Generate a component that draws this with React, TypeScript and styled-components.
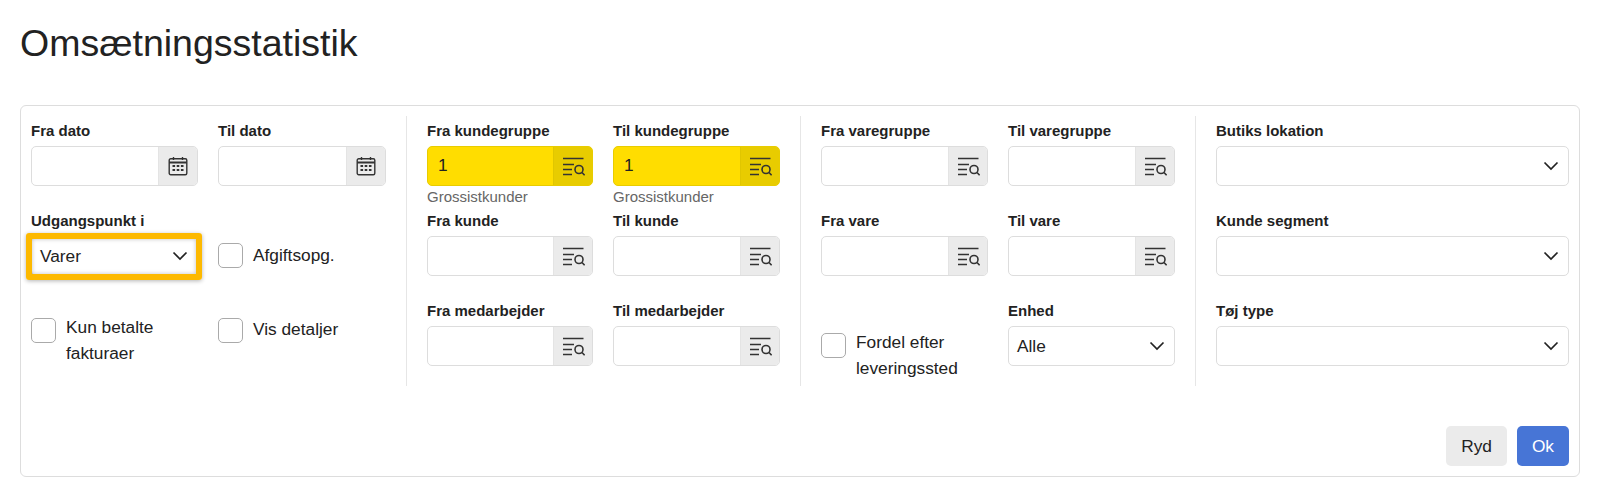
import React from "react";
import styled, { createGlobalStyle } from "styled-components";

const GlobalStyle = createGlobalStyle`
  html, body {
    margin: 0;
    background: #fff;
    color: #222;
    font-family: "Liberation Sans", Arial, sans-serif;
  }
  * { box-sizing: border-box; }
`;

const Page = styled.div`
  width: 1598px;
  height: 496px;
  padding: 19px 18px 0 20px;
  overflow: hidden;
`;

const Title = styled.h1`
  margin: 0 0 38px;
  height: 48px;
  font-size: 37.5px;
  line-height: 48px;
  font-weight: 400;
  color: #222;
`;

const Card = styled.div`
  height: 372px;
  border: 1px solid #ddd;
  border-radius: 6px;
  padding: 10px 10px 9px;
`;

const Sections = styled.div`
  display: flex;
  height: 270px;
`;

const Section = styled.div<{ $cols: string; $first?: boolean; $last?: boolean }>`
  display: grid;
  grid-template-columns: ${(p) => p.$cols};
  grid-auto-rows: 90px;
  column-gap: 20px;
  padding: 0 ${(p) => (p.$last ? "0" : "20px")} 0 ${(p) => (p.$first ? "0" : "20px")};
  border-right: ${(p) => (p.$last ? "none" : "1px solid #e6e6e6")};
  ${(p) => p.$last && "flex: 1;"}
`;

const Field = styled.div`
  position: relative;
  min-width: 0;
`;

const Label = styled.div`
  height: 30px;
  font-size: 15px;
  line-height: 30px;
  font-weight: 700;
  color: #222;
  white-space: nowrap;
`;

const Group = styled.div<{ $filled?: boolean }>`
  display: flex;
  height: 40px;
  border: 1px solid ${(p) => (p.$filled ? "#e8cc00" : "#ddd")};
  border-radius: 5px;
  overflow: hidden;
  background: ${(p) => (p.$filled ? "#ffdd00" : "#fff")};
`;

const Value = styled.div`
  flex: 1;
  padding-left: 10px;
  font-size: 17.3px;
  line-height: 36px;
  color: #222;
`;

const Addon = styled.div<{ $filled?: boolean }>`
  display: flex;
  align-items: center;
  justify-content: center;
  flex: 0 0 39px;
  color: #333;
  background: ${(p) => (p.$filled ? "#e8cc00" : "#ebebeb")};
  border-left: 1px solid ${(p) => (p.$filled ? "#e0c600" : "#e4e4e4")};
`;

const Hint = styled.div`
  margin-top: 2px;
  font-size: 15px;
  line-height: 18px;
  color: #666;
`;

const SelectBox = styled.div`
  display: flex;
  align-items: center;
  justify-content: space-between;
  height: 40px;
  padding: 0 9px 0 8px;
  border: 1px solid #ddd;
  border-radius: 5px;
  background: #fff;
  font-size: 17.3px;
  color: #222;
`;

const Highlight = styled.div`
  position: absolute;
  top: 27px;
  left: -5px;
  width: 176px;
  height: 47px;
  border: 6px solid #fdb900;
  border-radius: 3px;
  box-shadow: 0 1px 4px rgba(0, 0, 0, 0.3), inset 0 0 4px rgba(0, 0, 0, 0.25);
  pointer-events: none;
`;

const CheckRow = styled.div<{ $top: number }>`
  display: flex;
  gap: 10px;
  padding-top: ${(p) => p.$top}px;
  font-size: 17.3px;
  line-height: 25.5px;
  color: #222;
`;

const CheckText = styled.span<{ $lift: number }>`
  margin-top: -${(p) => p.$lift}px;
`;

const Box = styled.span`
  flex: 0 0 25px;
  height: 25px;
  border: 1px solid #aaa;
  border-radius: 5px;
  background: #fff;
`;

const Footer = styled.div`
  display: flex;
  justify-content: flex-end;
  gap: 10px;
  margin-top: 40px;
`;

const Button = styled.button<{ $primary?: boolean }>`
  height: 40px;
  padding: 0 15px;
  border: none;
  border-radius: 5px;
  font-family: inherit;
  font-size: 17.3px;
  color: ${(p) => (p.$primary ? "#fff" : "#222")};
  background: ${(p) => (p.$primary ? "#4775d6" : "#ebebeb")};
`;

const CalendarIcon = () => (
  <svg width="20" height="20" viewBox="0 0 20 20" fill="none" stroke="#333">
    <rect x="1.2" y="2.8" width="17.6" height="16" rx="1.5" strokeWidth="1.4" />
    <path d="M1.2 6.5h17.6" strokeWidth="2" />
    <path d="M5.5 1v3M14.5 1v3" strokeWidth="1.4" />
    <path d="M4.5 10h2.6M8.7 10h2.6M12.9 10h2.6M4.5 14h2.6M8.7 14h2.6M12.9 14h2.6" strokeWidth="2" />
  </svg>
);

const LookupIcon = () => (
  <svg width="23" height="19" viewBox="0 0 23 19" fill="none" stroke="#333" strokeWidth="1.6">
    <path d="M1 1.5h20.5M1 7.5h11M1 12.5h9M1 17.5h9" />
    <circle cx="17" cy="12.5" r="4" />
    <path d="M20 15.5l2.6 2.8" />
  </svg>
);

const Chevron = () => (
  <svg width="16" height="10" viewBox="0 0 16 10" fill="none" stroke="#222" strokeWidth="1.7">
    <path d="M1.5 1.5L8 8l6.5-6.5" />
  </svg>
);

type InputProps = { label: string; value?: string; hint?: string };

const DateField = ({ label }: InputProps) => (
  <Field>
    <Label>{label}</Label>
    <Group>
      <Value />
      <Addon>
        <CalendarIcon />
      </Addon>
    </Group>
  </Field>
);

const LookupField = ({ label, value, hint }: InputProps) => (
  <Field>
    <Label>{label}</Label>
    <Group $filled={!!value}>
      <Value>{value}</Value>
      <Addon $filled={!!value}>
        <LookupIcon />
      </Addon>
    </Group>
    {hint && <Hint>{hint}</Hint>}
  </Field>
);

const SelectField = ({ label, value, children }: InputProps & { children?: React.ReactNode }) => (
  <Field>
    <Label>{label}</Label>
    <SelectBox>
      <span>{value}</span>
      <Chevron />
    </SelectBox>
    {children}
  </Field>
);

const Check = ({ top, lift = 0, children }: { top: number; lift?: number; children: React.ReactNode }) => (
  <CheckRow $top={top}>
    <Box />
    <CheckText $lift={lift}>{children}</CheckText>
  </CheckRow>
);

export default function App() {
  return (
    <Page>
      <GlobalStyle />
      <Title>Omsætningsstatistik</Title>
      <Card>
        <Sections>
          <Section $first $cols="167px 168px">
            <DateField label="Fra dato" />
            <DateField label="Til dato" />
            <SelectField label="Udgangspunkt i" value="Varer">
              <Highlight />
            </SelectField>
            <Check top={37}>Afgiftsopg.</Check>
            <Check top={22} lift={3}>
              Kun betalte
              <br />
              fakturaer
            </Check>
            <Check top={22} lift={1}>Vis detaljer</Check>
          </Section>
          <Section $cols="166px 167px">
            <LookupField label="Fra kundegruppe" value="1" hint="Grossistkunder" />
            <LookupField label="Til kundegruppe" value="1" hint="Grossistkunder" />
            <LookupField label="Fra kunde" />
            <LookupField label="Til kunde" />
            <LookupField label="Fra medarbejder" />
            <LookupField label="Til medarbejder" />
          </Section>
          <Section $cols="167px 167px">
            <LookupField label="Fra varegruppe" />
            <LookupField label="Til varegruppe" />
            <LookupField label="Fra vare" />
            <LookupField label="Til vare" />
            <Check top={37} lift={3}>
              Fordel efter
              <br />
              leveringssted
            </Check>
            <SelectField label="Enhed" value="Alle" />
          </Section>
          <Section $last $cols="1fr">
            <SelectField label="Butiks lokation" />
            <SelectField label="Kunde segment" />
            <SelectField label="Tøj type" />
          </Section>
        </Sections>
        <Footer>
          <Button>Ryd</Button>
          <Button $primary>Ok</Button>
        </Footer>
      </Card>
    </Page>
  );
}
